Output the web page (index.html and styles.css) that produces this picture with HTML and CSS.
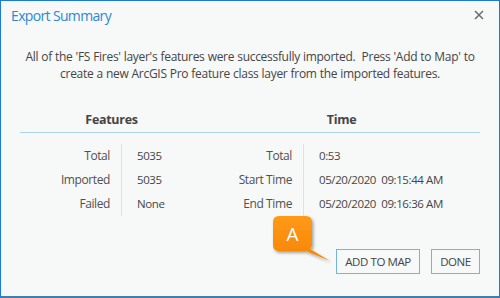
FILE: index.html
```html
<!DOCTYPE html>
<html>
<head>
<meta charset="utf-8">
<link rel="stylesheet" href="styles.css">
</head>
<body>
<div class="dialog">
  <div class="titlebar">
    <div class="title">Export Summary</div>
    <svg class="close" width="10" height="10" viewBox="0 0 10 10"><path d="M1 1 L9 9 M9 1 L1 9" stroke="#6b6b6b" stroke-width="1.5"/></svg>
  </div>
  <div class="message">
    <div class="line">All of the 'FS Fires' layer's features were successfully imported.&nbsp; Press 'Add to Map' to</div>
    <div class="line">create a new ArcGIS Pro feature class layer from the imported features.</div>
  </div>
  <div class="summary">
    <div class="headings">
      <div class="heading">Features</div>
      <div class="heading">Time</div>
    </div>
    <div class="rows">
      <div class="label">Total</div><div class="value">5035</div>
      <div class="label">Total</div><div class="value">0:53</div>
      <div class="label">Imported</div><div class="value">5035</div>
      <div class="label">Start Time</div><div class="value">05/20/2020&nbsp; 09:15:44 AM</div>
      <div class="label">Failed</div><div class="value">None</div>
      <div class="label">End Time</div><div class="value">05/20/2020&nbsp; 09:16:36 AM</div>
    </div>
  </div>
  <div class="footer">
    <button class="btn btn-add">ADD TO MAP</button>
    <button class="btn btn-done">DONE</button>
    <svg class="callout" width="64" height="52" viewBox="0 0 64 52">
      <defs>
        <linearGradient id="og" x1="0" y1="0" x2="0" y2="1">
          <stop offset="0" stop-color="#ff9a1a"/>
          <stop offset="1" stop-color="#f58400"/>
        </linearGradient>
        <filter id="sh" x="-20%" y="-20%" width="150%" height="150%">
          <feDropShadow dx="1.5" dy="2" stdDeviation="1.5" flood-color="#000" flood-opacity="0.35"/>
        </filter>
      </defs>
      <path filter="url(#sh)" fill="url(#og)" d="M9 2 H36 Q42 2 42 8 V30 Q42 33 40 35 L60 47 L36 37 H9 Q3 37 3 31 V8 Q3 2 9 2 Z"/>
      <text x="22.5" y="27" text-anchor="middle" class="callout-text">A</text>
    </svg>
  </div>
</div>
</body>
</html>
```
FILE: styles.css
```css
html, body {
  margin: 0;
  padding: 0;
}
body {
  width: 500px;
  height: 298px;
  font-family: "Open Sans", "Noto Sans", sans-serif;
  color: #454545;
}
.dialog {
  box-sizing: border-box;
  width: 500px;
  height: 298px;
  background: #f7f8f8;
  border-top: 1px solid #1a7bd2;
  border-left: 1px solid #1a7bd2;
  border-right: 1px solid #1a7bd2;
  border-bottom: 2px solid #3d7fae;
  display: flex;
  flex-direction: column;
}
.titlebar {
  height: 28px;
  display: flex;
  align-items: center;
  justify-content: space-between;
  padding: 0 15px 0 10px;
}
.title {
  font-size: 14px;
  color: #2d88d4;
  letter-spacing: -0.65px;
}
.close {
  display: block;
}
.message {
  margin: 20px 0 0;
  text-align: center;
  font-size: 12px;
  letter-spacing: -0.3px;
  word-spacing: 0.3px;
  color: #454545;
}
.line {
  height: 16.5px;
  line-height: 16.5px;
}
.summary {
  margin: 28px 19px 0 19px;
}
.headings {
  display: grid;
  grid-template-columns: 183px 1fr;
  border-bottom: 1px solid #a9d2ec;
  height: 22px;
  align-items: center;
}
.heading {
  text-align: center;
  font-weight: 700;
  font-size: 12.5px;
  letter-spacing: -0.3px;
  color: #454545;
  padding-bottom: 3px;
}
.rows {
  display: grid;
  grid-template-columns: 90px 91px 91px 1fr;
  margin-top: 11px;
  font-size: 12px;
  letter-spacing: -0.4px;
}
.label {
  text-align: right;
  line-height: 24px;
  height: 24px;
  color: #505050;
}
.value {
  margin-left: 11px;
  border-left: 1px solid #d3e6f3;
  padding-left: 15px;
  line-height: 24px;
  height: 24px;
  white-space: nowrap;
  font-size: 11.5px;
  letter-spacing: -0.4px;
  color: #454545;
}
.footer {
  position: relative;
  margin-top: 33px;
  display: flex;
  justify-content: flex-end;
  gap: 11px;
  padding-right: 19px;
}
.btn {
  box-sizing: border-box;
  height: 25px;
  background: #f7f8f8;
  border: 1px solid #72b6dc;
  font-family: "Open Sans", "Noto Sans", sans-serif;
  font-size: 11.5px;
  letter-spacing: -0.4px;
  color: #454545;
  margin: 0;
}
.btn-add {
  width: 84px;
  padding: 0;
}
.btn-done {
  width: 49px;
  padding: 0;
}
.callout {
  position: absolute;
  left: 269px;
  top: -35px;
  overflow: visible;
}
.callout-text {
  font-family: "Open Sans", "Noto Sans", sans-serif;
  font-size: 19px;
  fill: #ffffff;
}
```
